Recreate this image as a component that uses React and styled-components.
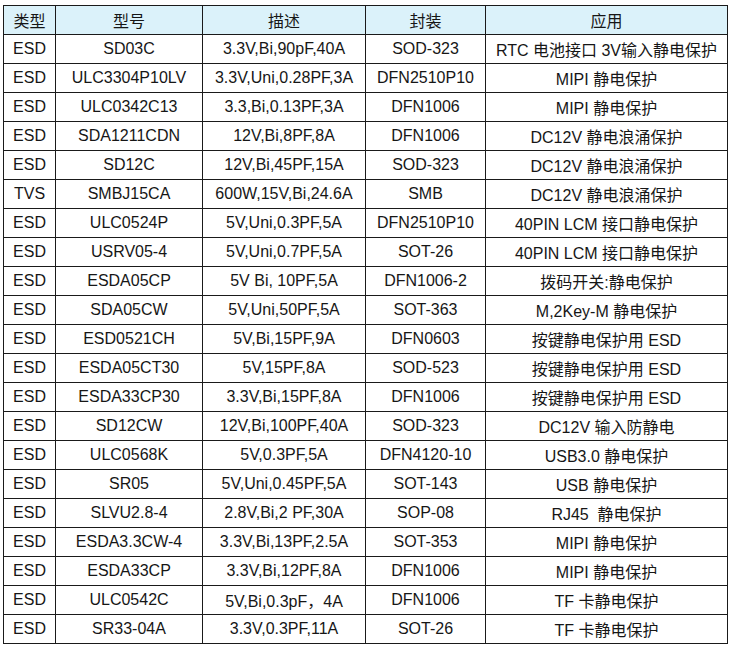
import React from "react";
import styled, { createGlobalStyle } from "styled-components";

const GlobalStyle = createGlobalStyle`
  body {
    margin: 0;
    background: #ffffff;
    font-family: "Liberation Sans", Arial, "Noto Sans CJK SC", sans-serif;
  }
`;

const Wrapper = styled.div`
  padding: 5px 0 0 3px;
`;

const Table = styled.table`
  border-collapse: collapse;
  table-layout: fixed;
  width: 724px;
  font-size: 16px;
  color: #161616;
`;

const HeadCell = styled.th`
  height: 28px;
  padding: 0;
  border: 1px solid #1a1a1a;
  background: #dbf2fa;
  font-weight: normal;
  text-align: center;
  white-space: nowrap;
`;

const Cell = styled.td`
  height: 28px;
  padding: 0;
  border: 1px solid #1a1a1a;
  text-align: center;
  white-space: pre;
  overflow: hidden;
`;

const columns = [
  { title: "类型", width: 52 },
  { title: "型号", width: 147 },
  { title: "描述", width: 163 },
  { title: "封装", width: 120 },
  { title: "应用", width: 242 },
];

const rows = [
  ["ESD", "SD03C", "3.3V,Bi,90pF,40A", "SOD-323", "RTC 电池接口 3V输入静电保护"],
  ["ESD", "ULC3304P10LV", "3.3V,Uni,0.28PF,3A", "DFN2510P10", "MIPI 静电保护"],
  ["ESD", "ULC0342C13", "3.3,Bi,0.13PF,3A", "DFN1006", "MIPI 静电保护"],
  ["ESD", "SDA1211CDN", "12V,Bi,8PF,8A", "DFN1006", "DC12V 静电浪涌保护"],
  ["ESD", "SD12C", "12V,Bi,45PF,15A", "SOD-323", "DC12V 静电浪涌保护"],
  ["TVS", "SMBJ15CA", "600W,15V,Bi,24.6A", "SMB", "DC12V 静电浪涌保护"],
  ["ESD", "ULC0524P", "5V,Uni,0.3PF,5A", "DFN2510P10", "40PIN LCM 接口静电保护"],
  ["ESD", "USRV05-4", "5V,Uni,0.7PF,5A", "SOT-26", "40PIN LCM 接口静电保护"],
  ["ESD", "ESDA05CP", "5V Bi, 10PF,5A", "DFN1006-2", "拨码开关:静电保护"],
  ["ESD", "SDA05CW", "5V,Uni,50PF,5A", "SOT-363", "M,2Key-M 静电保护"],
  ["ESD", "ESD0521CH", "5V,Bi,15PF,9A", "DFN0603", "按键静电保护用 ESD"],
  ["ESD", "ESDA05CT30", "5V,15PF,8A", "SOD-523", "按键静电保护用 ESD"],
  ["ESD", "ESDA33CP30", "3.3V,Bi,15PF,8A", "DFN1006", "按键静电保护用 ESD"],
  ["ESD", "SD12CW", "12V,Bi,100PF,40A", "SOD-323", "DC12V 输入防静电"],
  ["ESD", "ULC0568K", "5V,0.3PF,5A", "DFN4120-10", "USB3.0 静电保护"],
  ["ESD", "SR05", "5V,Uni,0.45PF,5A", "SOT-143", "USB 静电保护"],
  ["ESD", "SLVU2.8-4", "2.8V,Bi,2 PF,30A", "SOP-08", "RJ45  静电保护"],
  ["ESD", "ESDA3.3CW-4", "3.3V,Bi,13PF,2.5A", "SOT-353", "MIPI 静电保护"],
  ["ESD", "ESDA33CP", "3.3V,Bi,12PF,8A", "DFN1006", "MIPI 静电保护"],
  ["ESD", "ULC0542C", "5V,Bi,0.3pF，4A", "DFN1006", "TF 卡静电保护"],
  ["ESD", "SR33-04A", "3.3V,0.3PF,11A", "SOT-26", "TF 卡静电保护"],
];

export default function App() {
  return (
    <>
      <GlobalStyle />
      <Wrapper>
        <Table>
          <colgroup>
            {columns.map((c) => (
              <col key={c.title} style={{ width: c.width }} />
            ))}
          </colgroup>
          <thead>
            <tr>
              {columns.map((c) => (
                <HeadCell key={c.title}>{c.title}</HeadCell>
              ))}
            </tr>
          </thead>
          <tbody>
            {rows.map((r, i) => (
              <tr key={i}>
                {r.map((v, j) => (
                  <Cell key={j}>{v}</Cell>
                ))}
              </tr>
            ))}
          </tbody>
        </Table>
      </Wrapper>
    </>
  );
}
